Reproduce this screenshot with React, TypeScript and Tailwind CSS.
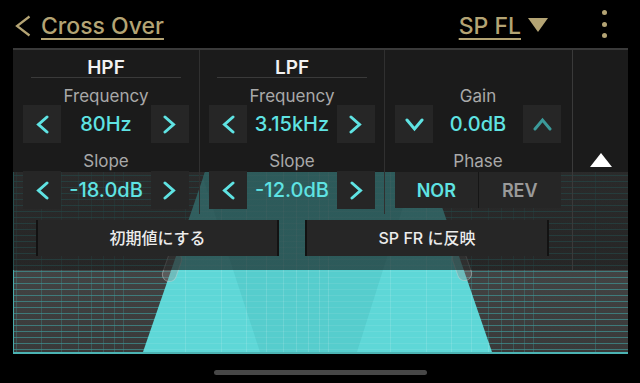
import React from "react";

type Dir = "left" | "right" | "up" | "down";

function Arrow({ dir, dim = false }: { dir: Dir; dim?: boolean }) {
  const horiz = dir === "left" || dir === "right";
  const w = horiz ? 15 : 19;
  const h = horiz ? 19 : 15;
  const d =
    dir === "left"
      ? "M12 2 L3.5 9.5 L12 17"
      : dir === "right"
      ? "M3 2 L11.5 9.5 L3 17"
      : dir === "down"
      ? "M2 3 L9.5 12 L17 3"
      : "M2 12 L9.5 3 L17 12";
  return (
    <svg width={w} height={h} viewBox={`0 0 ${w} ${h}`} fill="none">
      <path d={d} stroke={dim ? "#3b9a9a" : "#5fe3e3"} strokeWidth="3" strokeLinecap="round" strokeLinejoin="miter" />
    </svg>
  );
}

function StepButton({ children }: { children: React.ReactNode }) {
  return <div className="w-[38px] h-[38px] bg-[#262626] flex items-center justify-center">{children}</div>;
}

function Stepper({ value, left, right }: { value: string; left: React.ReactNode; right: React.ReactNode }) {
  return (
    <div className="flex items-center justify-between">
      <StepButton>{left}</StepButton>
      <span className="text-[20px] leading-none font-medium text-[#5fe3e3]">{value}</span>
      <StepButton>{right}</StepButton>
    </div>
  );
}

function Label({ children, className = "" }: { children: React.ReactNode; className?: string }) {
  return <div className={`text-center text-[17px] leading-[18px] text-[#a9a9a9] ${className}`}>{children}</div>;
}

function FilterColumn({ title, freq, slope, className }: { title: string; freq: string; slope: string; className: string }) {
  return (
    <div className={`flex flex-col border-r border-[#303030] ${className}`}>
      <div className="h-[28px] flex flex-col">
        <div className="mt-[9px] text-center text-[19px] leading-[18px] font-semibold text-[#f2f2f2]">{title}</div>
        <div className="mx-[8px] h-px bg-[#3a3a3a]" />
      </div>
      <Label className="mt-[9px]">Frequency</Label>
      <Stepper value={freq} left={<Arrow dir="left" />} right={<Arrow dir="right" />} />
      <Label className="mt-[9px]">Slope</Label>
      <div className="mt-[1px]">
        <Stepper value={slope} left={<Arrow dir="left" />} right={<Arrow dir="right" />} />
      </div>
    </div>
  );
}

function Graph() {
  const W = 615;
  const H = 180;
  const hLines: number[] = [];
  for (let y = 3; y < H; y += 6) hLines.push(y + 0.5);
  const vLines: number[] = [];
  for (let k = 0; k < 4; k++) {
    for (let n = 1; n <= 9; n++) {
      const x = Math.round(-95 + k * 205 + Math.log10(n) * 205) + 0.5;
      if (x > 2 && x < W) vLines.push(x);
    }
  }
  const outer = "192,0 417,0 479,180 130,180";
  const mid = "188,0 401,0 344,180 247,180";
  return (
    <svg width={W} height={H} viewBox={`0 0 ${W} ${H}`} className="block">
      <defs>
        <linearGradient id="gbg" x1="0" y1="0" x2="0" y2="1">
          <stop offset="0" stopColor="#4f4f4f" />
          <stop offset="1" stopColor="#393939" />
        </linearGradient>
        <clipPath id="trap">
          <polygon points={outer} />
        </clipPath>
      </defs>
      <rect width={W} height={H} fill="url(#gbg)" />
      {hLines.map((y) => (
        <line key={`h${y}`} x1={0} x2={W} y1={y} y2={y} stroke="#3f9494" strokeOpacity="0.7" strokeWidth="1" />
      ))}
      {vLines.map((x) => (
        <line key={`v${x}`} x1={x} x2={x} y1={0} y2={H} stroke="#3f9494" strokeOpacity="0.35" strokeWidth="1" />
      ))}
      <polygon points={outer} fill="#5ed7d7" />
      <g clipPath="url(#trap)">
        <polygon points={mid} fill="#56cdcd" />
        {hLines.map((y) => (
          <line key={`th${y}`} x1={0} x2={W} y1={y} y2={y} stroke="#ffffff" strokeOpacity="0.08" strokeWidth="1" />
        ))}
        {vLines.map((x) => (
          <line key={`tv${x}`} x1={x} x2={x} y1={0} y2={H} stroke="#ffffff" strokeOpacity="0.13" strokeWidth="1" />
        ))}
      </g>
      <rect x={-7} y={-15} width={14} height={30} rx={7} transform="translate(159,95) rotate(19)" fill="#8a8a8a" fillOpacity="0.35" stroke="#d0d0d0" strokeOpacity="0.45" />
      <rect x={-7} y={-15} width={14} height={30} rx={7} transform="translate(449,94) rotate(-19)" fill="#8a8a8a" fillOpacity="0.35" stroke="#d0d0d0" strokeOpacity="0.45" />
      <line x1={0.5} x2={0.5} y1={0} y2={H} stroke="#4aa9a9" strokeWidth="1" />
    </svg>
  );
}

export default function App() {
  return (
    <div className="w-[640px] h-[383px] bg-black overflow-hidden font-['Inter','Noto_Sans_CJK_JP',sans-serif]">
      {/* header */}
      <div className="h-[48px] flex items-center pt-[4px]">
        <svg className="ml-[14px]" width="18" height="22" viewBox="0 0 18 22" fill="none">
          <path d="M15.5 1.5 L3 11 L15.5 20.5" stroke="#b4a474" strokeWidth="2.2" />
        </svg>
        <span className="ml-[9px] text-[23px] leading-none font-medium text-[#b4a474] underline decoration-2 decoration-[#b4a474] underline-offset-[4px]">
          Cross Over
        </span>
        <div className="ml-auto flex items-center">
          <span className="text-[23px] leading-none font-medium text-[#b4a474] underline decoration-2 decoration-[#b4a474] underline-offset-[4px]">
            SP FL
          </span>
          <svg className="ml-[7px] -mt-[3px]" width="20" height="14" viewBox="0 0 20 14">
            <polygon points="0,0 20,0 10,14" fill="#b4a474" />
          </svg>
        </div>
        <div className="ml-[54px] mr-[33px] flex flex-col gap-[6.5px] -mt-[4px]">
          <div className="w-[5px] h-[5px] rounded-full bg-[#b4a474]" />
          <div className="w-[5px] h-[5px] rounded-full bg-[#b4a474]" />
          <div className="w-[5px] h-[5px] rounded-full bg-[#b4a474]" />
        </div>
      </div>

      {/* main */}
      <div className="relative ml-[13px] w-[615px] h-[306px]">
        <div className="absolute left-0 top-[124px] w-[615px] border-b-2 border-[#4bb3b3]">
          <Graph />
        </div>

        <div className="relative flex h-[222px] border-t-2 border-[#3a3a3a] bg-[linear-gradient(to_bottom,#1b1b1b_122px,rgba(20,20,20,0.62)_122px)]">
          <div className="w-[559px] flex flex-col">
            <div className="flex h-[164px]">
              <FilterColumn title="HPF" freq="80Hz" slope="-18.0dB" className="w-[187px] px-[10px]" />
              <FilterColumn title="LPF" freq="3.15kHz" slope="-12.0dB" className="w-[185px] px-[9px]" />
              <div className="w-[187px] flex flex-col pl-[10px] pr-[11px]">
                <div className="h-[28px]" />
                <Label className="mt-[9px]">Gain</Label>
                <Stepper value="0.0dB" left={<Arrow dir="down" />} right={<Arrow dir="up" dim />} />
                <Label className="mt-[9px]">Phase</Label>
                <div className="mt-[2px] flex h-[36px] bg-[#262626]">
                  <div className="flex-1 flex items-center justify-center border-r border-[#161616] text-[18px] font-semibold text-[#5fe3e3]">
                    NOR
                  </div>
                  <div className="flex-1 flex items-center justify-center text-[18px] font-semibold text-[#9a9a9a]">
                    REV
                  </div>
                </div>
              </div>
            </div>
            <div className="flex gap-[26px] pl-[23px] pt-[6px]">
              <div className="w-[243px] h-[36px] bg-[#262626] border-x-2 border-[#121212] flex items-center justify-center text-[16px] font-medium text-[#ececec]">
                初期値にする
              </div>
              <div className="w-[244px] h-[36px] bg-[#262626] border-x-2 border-[#121212] flex items-center justify-center text-[16px] font-medium text-[#ececec]">
                SP FR に反映
              </div>
            </div>
          </div>
          <div className="w-[56px] border-l border-[#3a3a3a] flex flex-col items-center">
            <svg className="mt-[103px]" width="22" height="14" viewBox="0 0 22 14">
              <polygon points="11,0 22,14 0,14" fill="#ffffff" />
            </svg>
          </div>
        </div>
      </div>

      {/* home indicator */}
      <div className="mx-auto mt-[16px] w-[213px] h-[5px] rounded-full bg-[#474747]" />
    </div>
  );
}
